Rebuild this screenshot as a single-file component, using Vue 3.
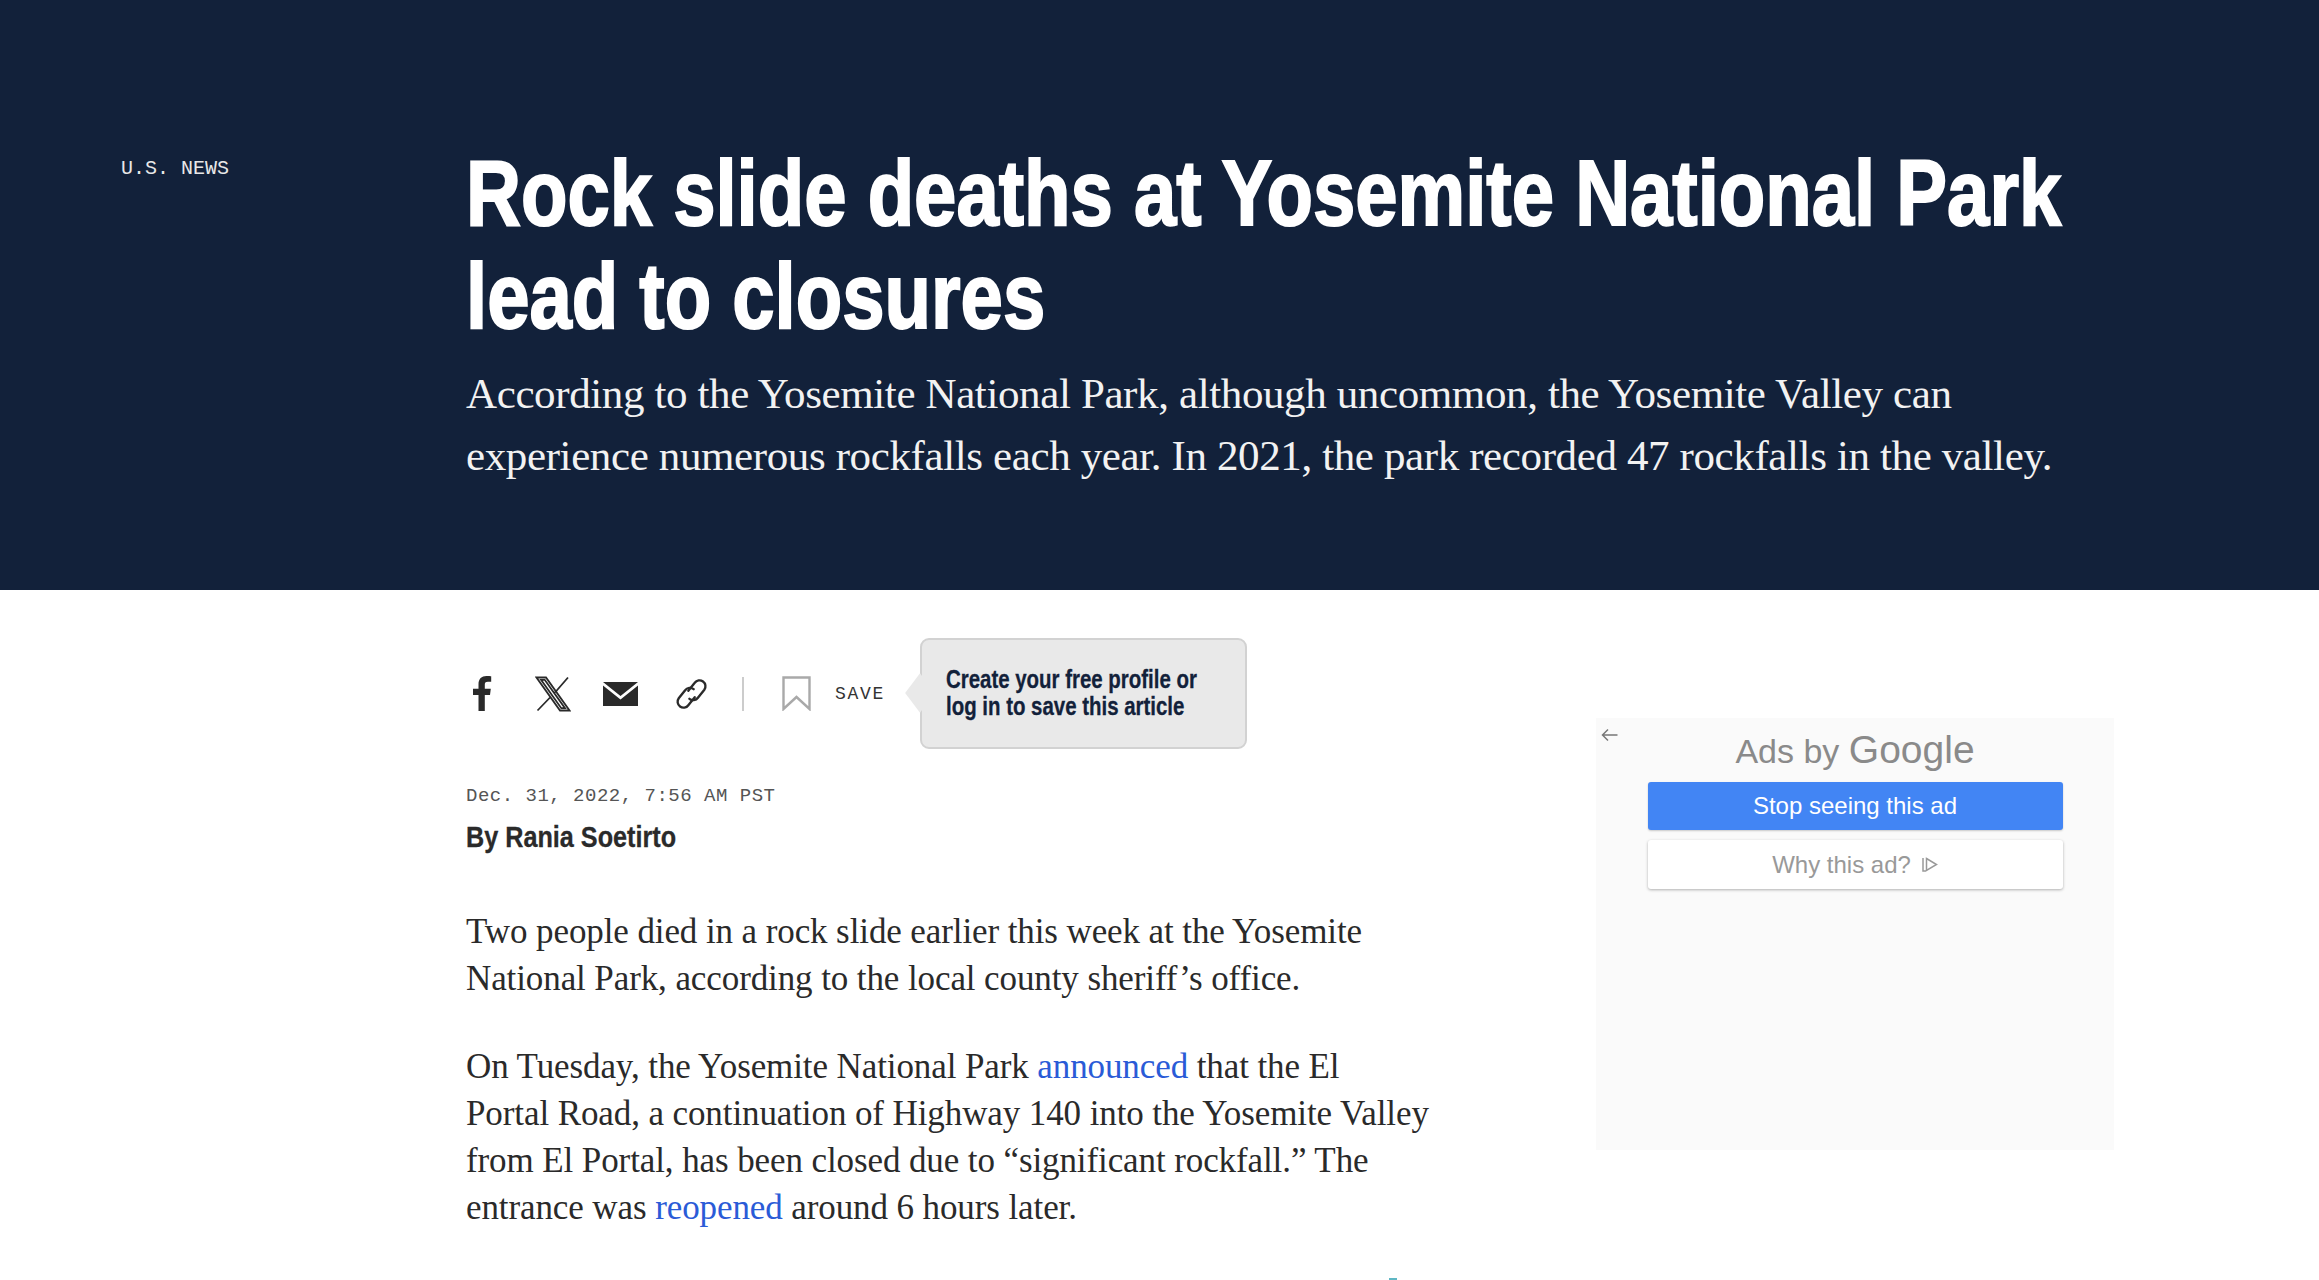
<script setup>
</script>

<template>
  <div class="page">
    <header class="hero">
      <div class="eyebrow">U.S. NEWS</div>
      <div class="hero-main">
        <h1 class="title">Rock slide deaths at Yosemite National Park<br />lead to closures</h1>
        <p class="dek">According to the Yosemite National Park, although uncommon, the Yosemite Valley can<br />experience numerous rockfalls each year. In 2021, the park recorded 47 rockfalls in the valley.</p>
      </div>
    </header>
    <main class="content">
      <article class="article">
        <div class="share">
          <svg class="ic-f" viewBox="0 0 19 35"><path d="M5.500 35V19H0v-6.200h5.500V8.200C5.500 2.800 8.700 0 13.400 0c2.200 0 4.200.2 4.800.3v5.500h-3.300c-2.600 0-3.100 1.200-3.100 3v4h6l-.8 6.200h-5.200v16z" fill="#2a2a2a"/></svg>
          <svg class="ic-x" viewBox="0 0 36 36"><path d="M1.500 1.500h9.500l23.500 33h-9.500zM6 3.800l20.300 28.400h3.700L9.700 3.800zM33 1.500 20 16.500M16 20.500 2.500 34.500" fill="none" stroke="#2a2a2a" stroke-width="1.800"/></svg>
          <svg class="ic-mail" viewBox="0 0 35 24"><path d="M0 0h35L17.500 14zM0 3.500l17.500 14L35 3.500V24H0z" fill="#2a2a2a"/></svg>
          <svg class="ic-link" viewBox="2 1 29 30"><g fill="none" stroke="#2a2a2a" stroke-width="2.200" stroke-linecap="round"><path d="M14 13 20 5.500a5.500 5.500 0 0 1 9 6.500l-6 7.500a5.500 5.500 0 0 1-8 1"/><path d="M20 19 14 26.500a5.500 5.500 0 0 1-9-6.500l6-7.500a5.500 5.500 0 0 1 8-1"/></g></svg>
          <span class="divider"></span>
          <svg class="ic-save" viewBox="0 0 29 35"><path d="M1.500 1.500h26v31.500L14.500 21 1.500 33z" fill="none" stroke="#a9a9a9" stroke-width="2.400"/></svg>
          <span class="save">SAVE</span>
          <div class="tip"><span class="tip-text">Create your free profile or<br />log in to save this article</span></div>
        </div>
        <div class="date">Dec. 31, 2022, 7:56 AM PST</div>
        <div class="byline">By Rania Soetirto</div>
        <p class="para">Two people died in a rock slide earlier this week at the Yosemite<br />National Park, according to the local county sheriff’s office.</p>
        <p class="para">On Tuesday, the Yosemite National Park <a>announced</a> that the El<br />Portal Road, a continuation of Highway 140 into the Yosemite Valley<br />from El Portal, has been closed due to “significant rockfall.” The<br />entrance was <a>reopened</a> around 6 hours later.</p>
      </article>
      <aside class="ad">
        <svg class="back" viewBox="0 0 17 14"><path d="M16.500 7H1.500M7 1.500 1.500 7 7 12.500" fill="none" stroke="#777" stroke-width="1.500"/></svg>
        <div class="ad-title">Ads by <span class="google">Google</span></div>
        <div class="btn btn-blue">Stop seeing this ad</div>
        <div class="btn btn-white">Why this ad?
          <svg class="why" viewBox="0 0 17 17"><path d="M2 2v13h3M5.500 2.500l10 6-10 6z" fill="none" stroke="#999" stroke-width="1.500"/></svg>
        </div>
      </aside>
    </main>
    <span class="speck"></span>
  </div>
</template>

<style>
html, body { margin: 0; background: #fff; overflow: hidden; }
</style>

<style scoped>
.page { width: 2319px; height: 1280px; overflow: hidden; background: #fff; position: relative; }
.hero { box-sizing: border-box; height: 590px; background: #12213a; color: #fff; display: flex; padding: 0 0 0 121px; }
.eyebrow { width: 345px; flex: none; padding-top: 157px; font: 20px/24px "Liberation Mono", monospace; color: #e8e8e8; }
.hero-main { padding-top: 142px; }
.title { margin: 0; width: 1951px; font: 700 93px/103px "Liberation Sans", sans-serif; white-space: nowrap; transform: scaleX(.818); transform-origin: left top; -webkit-text-stroke: 2px #fff; }
.dek { margin: 15px 0 0; width: 1700px; font: 400 43px/62px "Liberation Serif", serif; letter-spacing: -0.380px; white-space: nowrap; color: #f2f2f2; }
.content { display: flex; padding-left: 466px; }
.article { width: 1130px; flex: none; }
.share { display: flex; align-items: center; height: 111px; margin-top: 48px; position: relative; }
.ic-f { width: 19px; height: 35px; margin-left: 7px; }
.ic-x { width: 36px; height: 36px; margin-left: 43px; }
.ic-mail { width: 35px; height: 24px; margin-left: 32px; }
.ic-link { width: 34px; height: 32px; margin-left: 36px; }
.divider { width: 2px; height: 34px; background: #ccc; margin-left: 34px; }
.ic-save { width: 29px; height: 35px; margin-left: 38px; }
.save { margin-left: 24px; font: 18px/24px "Liberation Mono", monospace; letter-spacing: 1.700px; color: #333; }
.tip { position: relative; margin-left: 35px; box-sizing: border-box; width: 327px; height: 111px; padding: 26px 24px; background: #e9e9e9; border: 2px solid #d2d2d2; border-radius: 9px; font: 700 25px/27px "Liberation Sans", sans-serif; color: #12213a; white-space: nowrap; }
.tip-text { display: block; transform: scaleX(.817); transform-origin: left top; -webkit-text-stroke: .3px #12213a; }
.tip::before { content: ""; position: absolute; left: -16px; top: 39px; width: 28px; height: 28px; background: #e9e9e9; transform: scaleX(.75) rotate(45deg); }
.date { margin-top: 35px; font: 19px/24px "Liberation Mono", monospace; letter-spacing: .500px; color: #555; }
.byline { margin-top: 11px; font: 700 30px/36px "Liberation Sans", sans-serif; color: #2a2a2a; transform: scaleX(.84); transform-origin: left top; -webkit-text-stroke: .3px #2a2a2a; }
.para { margin: 54px 0 0; font: 400 35px/46.700px "Liberation Serif", serif; letter-spacing: -0.100px; color: #2a2a2a; white-space: nowrap; }
.para + .para { margin-top: 42px; }
.para a { color: #2a5bd7; }
.ad { box-sizing: border-box; width: 518px; height: 432px; margin-top: 128px; background: #fafafa; position: relative; display: flex; flex-direction: column; align-items: center; padding-top: 10px; }
.back { position: absolute; left: 5px; top: 10px; width: 17px; height: 14px; }
.ad-title { font: 34px/44px "Liberation Sans", sans-serif; color: #8a8a8a; }
.google { font-size: 39px; }
.btn { box-sizing: border-box; width: 415px; display: flex; align-items: center; justify-content: center; gap: 10px; border-radius: 3px; font: 24px/1 "Liberation Sans", sans-serif; }
.btn-blue { height: 48px; margin-top: 9px; background: #4285f4; color: #fff; box-shadow: 0 1px 2px rgba(0,0,0,.2); }
.btn-white { height: 49px; margin-top: 10px; background: #fff; color: #999; box-shadow: 0 1px 3px rgba(0,0,0,.3); }
.why { width: 17px; height: 17px; }
.speck { position: absolute; left: 1389px; bottom: 0; width: 8px; height: 2px; background: #5fb7c4; }
</style>
